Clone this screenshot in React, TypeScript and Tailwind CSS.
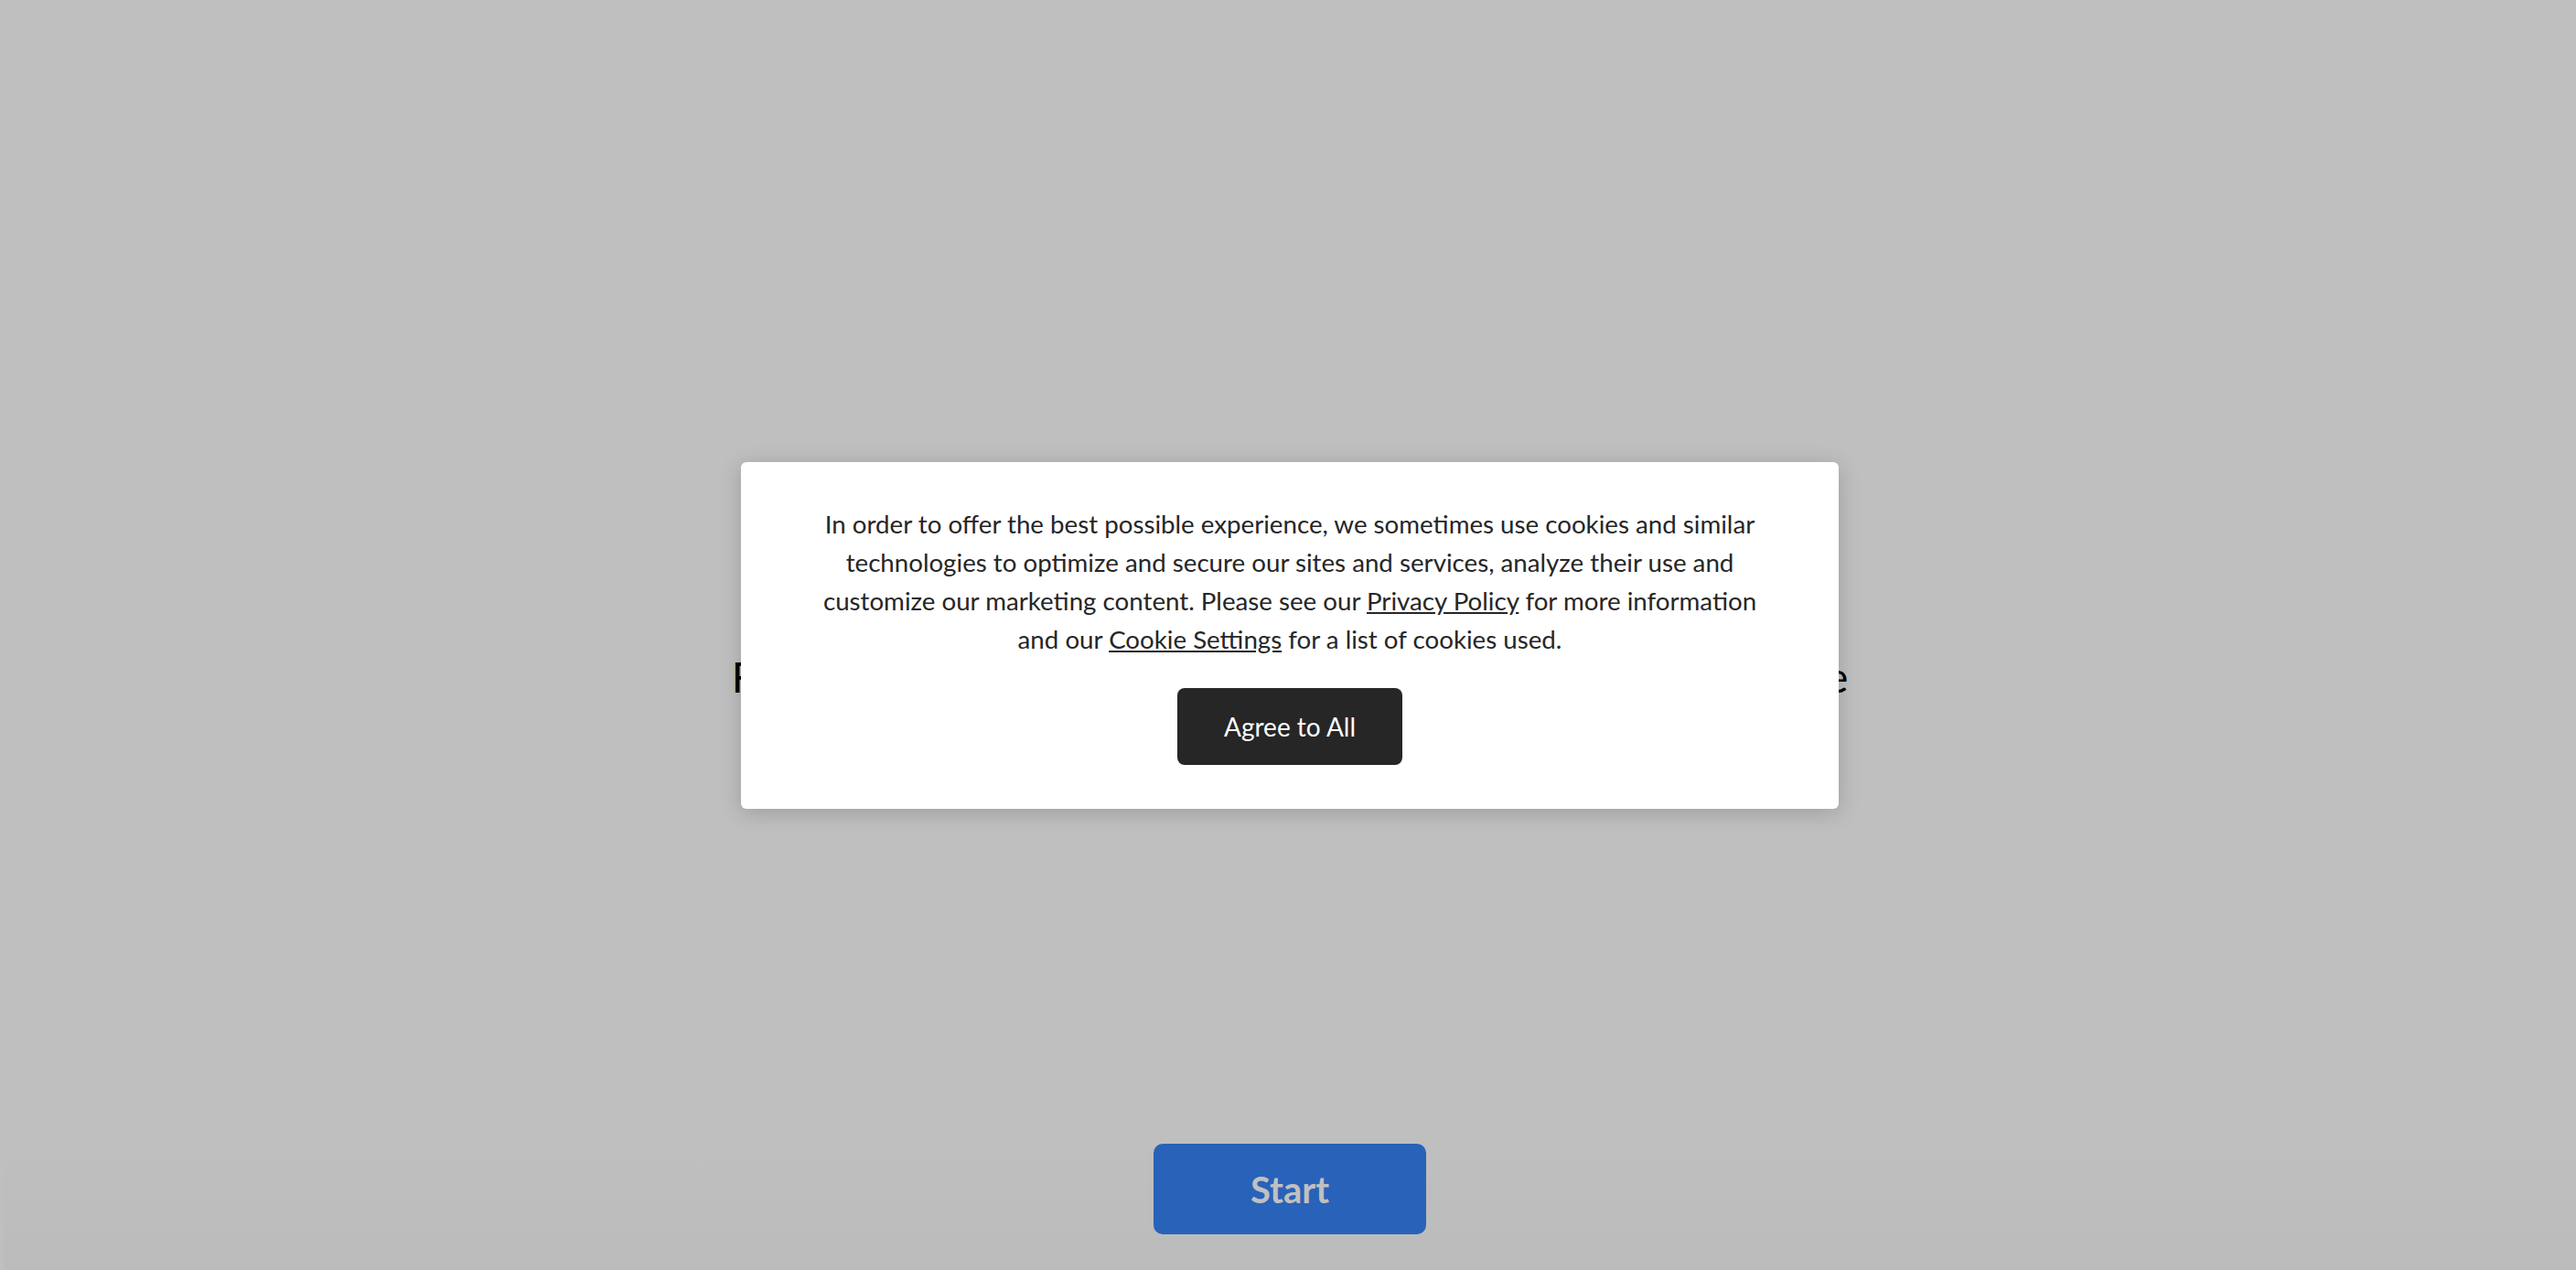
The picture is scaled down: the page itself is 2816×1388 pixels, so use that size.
export default function App() {
  return (
    <main
      className="relative flex h-screen w-full flex-col items-center overflow-hidden bg-[#bfbfbf] pl-[4px]"
      style={{ fontFamily: "Lato, 'Open Sans', sans-serif" }}
    >
      <h1 className="mt-[711px] whitespace-nowrap text-[46px] leading-[58px] text-black">
        Find out what type of traveler you are with our fun challenge
      </h1>

      <div className="flex-1" />

      <footer className="flex w-full justify-center bg-gradient-to-b from-[#bfbfbf] to-[#bbbbbb] pb-[39px]">
        <button className="flex h-[99px] w-[298px] items-center justify-center rounded-[10px] bg-[#2962b9] text-[40px] font-bold text-[#c0c0c0]">
          Start
        </button>
      </footer>

      <div className="absolute inset-0 flex items-center justify-center pl-[4px]">
        <div className="flex w-[1200px] flex-col items-center rounded-[6px] bg-white px-[80px] pt-[47px] pb-[48px] shadow-[0_4px_24px_rgba(0,0,0,0.18)]">
          <p className="text-center text-[27.7px] leading-[42px] text-[#262626]">
            In order to offer the best possible experience, we sometimes use cookies and similar technologies to
            optimize and secure our sites and services, analyze their use and customize our marketing content.
            Please see our <a className="underline">Privacy Policy</a> for more information and our{" "}
            <a className="underline">Cookie Settings</a> for a list of cookies used.
          </p>
          <button className="mt-[32px] flex h-[84px] w-[246px] items-center justify-center rounded-[8px] bg-[#262626] text-[28px] text-white">
            Agree to All
          </button>
        </div>
      </div>
    </main>
  );
}
